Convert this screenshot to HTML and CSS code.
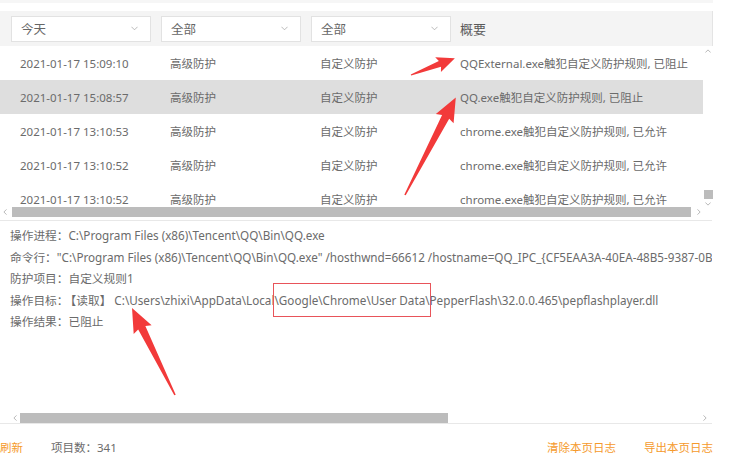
FILE: index.html
```html
<!DOCTYPE html>
<html lang="zh-CN">
<head>
<meta charset="UTF-8">
<title>防护日志</title>
<link rel="stylesheet" href="styles.css">
</head>
<body>
<div class="app">
  <div class="topbar"></div>

  <!-- log list -->
  <div class="list-head">
    <div class="select"><span>今天</span><svg class="chev" viewBox="0 0 8 5"><polyline points="0.5,0.5 4,4 7.5,0.5"/></svg></div>
    <div class="select"><span>全部</span><svg class="chev" viewBox="0 0 8 5"><polyline points="0.5,0.5 4,4 7.5,0.5"/></svg></div>
    <div class="select"><span>全部</span><svg class="chev" viewBox="0 0 8 5"><polyline points="0.5,0.5 4,4 7.5,0.5"/></svg></div>
    <div class="head-title">概要</div>
  </div>

  <div class="list-body">
    <div class="rows">
      <div class="row">
        <span class="c-time">2021-01-17 15:09:10</span><span class="c-type">高级防护</span><span class="c-rule">自定义防护</span><span class="c-sum">QQExternal.exe触犯自定义防护规则, 已阻止</span>
      </div>
      <div class="row row-on">
        <span class="c-time">2021-01-17 15:08:57</span><span class="c-type">高级防护</span><span class="c-rule">自定义防护</span><span class="c-sum">QQ.exe触犯自定义防护规则, 已阻止</span>
      </div>
      <div class="row">
        <span class="c-time">2021-01-17 13:10:53</span><span class="c-type">高级防护</span><span class="c-rule">自定义防护</span><span class="c-sum">chrome.exe触犯自定义防护规则, 已允许</span>
      </div>
      <div class="row">
        <span class="c-time">2021-01-17 13:10:52</span><span class="c-type">高级防护</span><span class="c-rule">自定义防护</span><span class="c-sum">chrome.exe触犯自定义防护规则, 已允许</span>
      </div>
      <div class="row">
        <span class="c-time">2021-01-17 13:10:52</span><span class="c-type">高级防护</span><span class="c-rule">自定义防护</span><span class="c-sum">chrome.exe触犯自定义防护规则, 已允许</span>
      </div>
    </div>
    <div class="vscroll">
      <svg class="tick" viewBox="0 0 8 5"><polyline points="0.5,4.5 4,1 7.5,4.5"/></svg>
      <div class="vthumb"></div>
      <svg class="tick" viewBox="0 0 8 5"><polyline points="0.5,0.5 4,4 7.5,0.5"/></svg>
    </div>
  </div>

  <div class="hscroll">
    <svg class="tick-h" viewBox="0 0 5 8"><polyline points="4.5,0.5 1,4 4.5,7.5"/></svg>
    <div class="hthumb thumb-1"></div>
    <svg class="tick-h" viewBox="0 0 5 8"><polyline points="0.5,0.5 4,4 0.5,7.5"/></svg>
  </div>

  <!-- selected entry -->
  <div class="detail">
    <div>操作进程：C:\Program Files (x86)\Tencent\QQ\Bin\QQ.exe</div>
    <div>命令行："C:\Program Files (x86)\Tencent\QQ\Bin\QQ.exe" /hosthwnd=66612 /hostname=QQ_IPC_{CF5EAA3A-40EA-48B5-9387-0B</div>
    <div>防护项目：自定义规则1</div>
    <div>操作目标：<span class="op">【读取】</span>C:\Users\zhixi\AppData\Local<span class="mark">\Google\Chrome\User Data\</span>PepperFlash\32.0.0.465\pepflashplayer.dll</div>
    <div>操作结果：已阻止</div>
  </div>

  <div class="hscroll hscroll-b">
    <svg class="tick-h" viewBox="0 0 5 8"><polyline points="4.5,0.5 1,4 4.5,7.5"/></svg>
    <div class="hthumb thumb-2"></div>
    <svg class="tick-h" viewBox="0 0 5 8"><polyline points="0.5,0.5 4,4 0.5,7.5"/></svg>
  </div>

  <div class="footer">
    <span class="link">刷新</span>
    <span class="count">项目数：341</span>
    <span class="link push">清除本页日志</span>
    <span class="link">导出本页日志</span>
  </div>

  <!-- annotation arrows over the screenshot -->
  <svg class="arrows" viewBox="0 0 735 465">
    <polygon transform="translate(411,75) rotate(-21)" points="0,-0.6 31,-3 29,-8 47,0 29,8 31,3 0,0.6"/>
    <polygon transform="translate(405,195) rotate(-62.5)" points="0,-0.8 88,-4 86,-10 110,0 86,10 88,4 0,0.8"/>
    <polygon transform="translate(175,395) rotate(-116.3)" points="0,-0.8 75,-4 73,-10 97,0 73,10 75,4 0,0.8"/>
  </svg>
</div>
</body>
</html>
```

FILE: styles.css
```css
body {
  margin: 0;
  background: #fff;
  font-family: "Noto Sans", "Noto Sans CJK SC", sans-serif;
  font-size: 11.5px;
  color: #6b6b6b;
}

.app {
  position: relative;
  width: 735px;
  height: 465px;
  overflow: hidden;
}

.topbar {
  width: 713px;
  height: 3px;
  background: #f6f6f6;
  margin-bottom: 8px;
}

/* list header with filters */
.list-head {
  width: 713px;
  height: 35px;
  box-sizing: border-box;
  background: #f4f4f4;
  border-right: 1px solid #e4e4e4;
  display: flex;
  align-items: center;
  gap: 10px;
  padding-left: 11px;
}
.select {
  width: 140px;
  height: 26px;
  box-sizing: border-box;
  background: #fff;
  border: 1px solid #e2e2e2;
  display: flex;
  align-items: center;
  justify-content: space-between;
  padding: 0 12px 0 9px;
  font-size: 12.5px;
  color: #666;
}
.chev {
  width: 7px;
  height: 5px;
  fill: none;
  stroke: #a8a8a8;
  stroke-width: 0.9;
}
.head-title {
  margin-left: -1px;
  font-size: 13px;
  color: #5a5a5a;
}

/* rows */
.list-body {
  display: flex;
  width: 713px;
  height: 161px;
}
.rows {
  width: 703px;
  overflow: hidden;
}
.row {
  height: 34px;
  display: flex;
  align-items: center;
  white-space: nowrap;
}
.row-on {
  background: #dedede;
}
.c-time { width: 150px; padding-left: 20px; }
.c-type { width: 150px; }
.c-rule { width: 140px; }

.vscroll {
  width: 10px;
  display: flex;
  flex-direction: column;
  align-items: center;
  padding-top: 3px;
}
.tick {
  width: 6px;
  height: 4px;
  fill: none;
  stroke: #a0a0a0;
  stroke-width: 1;
}
.vthumb {
  width: 9px;
  height: 9px;
  background: #bcbcbc;
  margin-top: auto;
  margin-bottom: 3px;
}
.vscroll .tick:last-child {
  margin-bottom: 1px;
}

/* horizontal scrollbars */
.hscroll {
  width: 712px;
  height: 14px;
  box-sizing: border-box;
  border-bottom: 1px solid #e8e8e8;
  display: flex;
  align-items: flex-start;
  padding-left: 3px;
}
.tick-h {
  width: 4px;
  height: 6px;
  margin-top: 2px;
  fill: none;
  stroke: #a0a0a0;
  stroke-width: 1;
}
.hthumb {
  height: 10px;
  background: #bcbcbc;
}
.thumb-1 {
  width: 679px;
  margin: 0 6px 0 5px;
}

.detail {
  width: 712px;
  height: 192px;
  box-sizing: border-box;
  padding: 4px 0 0 10px;
  overflow: hidden;
  white-space: nowrap;
  font-size: 11.7px;
  line-height: 21.5px;
}
.op {
  margin: 0 3px 0 2px;
}
.mark {
  border: 1.5px solid #e8545a;
  padding: 8px 0;
  margin: 0 -1px;
}

.hscroll-b {
  height: 11px;
  padding-left: 13px;
}
.thumb-2 {
  width: 428px;
  margin: 0 255px 0 3px;
}

/* footer actions */
.footer {
  width: 713px;
  height: 46px;
  display: flex;
  align-items: center;
}
.link {
  color: #f59a2c;
}
.count {
  margin-left: 28px;
}
.push {
  margin-left: auto;
  margin-right: 28px;
}

.arrows {
  position: absolute;
  left: 0;
  top: 0;
  width: 735px;
  height: 465px;
  pointer-events: none;
  fill: #f23a3a;
}
```
